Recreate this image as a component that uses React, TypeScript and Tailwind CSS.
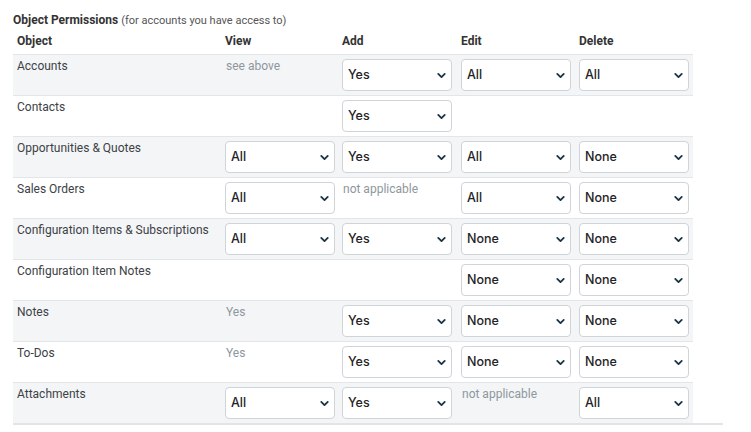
import { ChevronDown } from 'lucide-react';

type Cell = { kind: 'select'; value: string } | { kind: 'text'; value: string } | null;

type Row = {
  name: string;
  cells: Cell[];
};

const sel = (value: string): Cell => ({ kind: 'select', value });
const txt = (value: string): Cell => ({ kind: 'text', value });

const rows: Row[] = [
  { name: 'Accounts', cells: [txt('see above'), sel('Yes'), sel('All'), sel('All')] },
  { name: 'Contacts', cells: [null, sel('Yes'), null, null] },
  { name: 'Opportunities & Quotes', cells: [sel('All'), sel('Yes'), sel('All'), sel('None')] },
  { name: 'Sales Orders', cells: [sel('All'), txt('not applicable'), sel('All'), sel('None')] },
  {
    name: 'Configuration Items & Subscriptions',
    cells: [sel('All'), sel('Yes'), sel('None'), sel('None')],
  },
  { name: 'Configuration Item Notes', cells: [null, null, sel('None'), sel('None')] },
  { name: 'Notes', cells: [txt('Yes'), sel('Yes'), sel('None'), sel('None')] },
  { name: 'To-Dos', cells: [txt('Yes'), sel('Yes'), sel('None'), sel('None')] },
  { name: 'Attachments', cells: [sel('All'), sel('Yes'), txt('not applicable'), sel('All')] },
];

const optionsFor = (v: string) => (v === 'Yes' ? ['Yes', 'No'] : ['All', 'Mine', 'None']);

function PermSelect({ value }: { value: string }) {
  return (
    <div className="relative w-[110px] h-[32px]">
      <select
        defaultValue={value}
        className="appearance-none w-full h-full rounded-[4px] border border-[#cfd4d8] bg-white pl-[5px] pr-6 pt-[2px] font-['Inter',sans-serif] text-[12.5px] font-medium text-[#1f2326] outline-none">
        {optionsFor(value).map((o) => (
          <option key={o} value={o}>
            {o}
          </option>
        ))}
      </select>
      <ChevronDown
        size={13}
        strokeWidth={3.4}
        className="pointer-events-none absolute right-[4px] top-[10px] text-[#1b3444]"
      />
    </div>
  );
}

export default function App() {
  return (
    <div className="bg-white w-[751px] h-[432px] pl-[13px] pt-[13px] font-['Roboto',sans-serif]">
      {/* section title */}
      <div className="h-[15px] leading-[15px] text-[12px] text-[#333]">
        <span className="font-bold">Object Permissions</span>{' '}
        <span className="text-[11px] text-[#555]">(for accounts you have access to)</span>
      </div>

      <table className="border-collapse table-fixed w-[680px] mt-[5px]">
        <colgroup>
          <col className="w-[208px]" />
          <col className="w-[117px]" />
          <col className="w-[119px]" />
          <col className="w-[118px]" />
          <col className="w-[118px]" />
        </colgroup>
        <thead>
          <tr className="h-[21px]">
            {['Object', 'View', 'Add', 'Edit', 'Delete'].map((h) => (
              <th
                key={h}
                className="text-left align-top px-[4px] pt-[1px] text-[12px] leading-[15px] font-bold text-[#333]">
                {h}
              </th>
            ))}
          </tr>
        </thead>
        <tbody>
          {rows.map((row, i) => (
            <tr
              key={row.name}
              className={`border-t border-[#e3e6e8] h-[41px] ${i % 2 === 0 ? 'bg-[#f4f5f7]' : 'bg-white'}`}>
              <td className="align-top px-[4px] pt-[4px] text-[12px] leading-[14px] text-[#3c4246]">
                {row.name}
              </td>
              {row.cells.map((c, j) => (
                <td key={j} className="align-top px-[4px] pt-[4px] pb-[4px]">
                  {c?.kind === 'select' && <PermSelect value={c.value} />}
                  {c?.kind === 'text' && (
                    <span className="block text-[12px] leading-[14px] text-[#8e979d] pl-[1px]">
                      {c.value}
                    </span>
                  )}
                </td>
              ))}
            </tr>
          ))}
        </tbody>
      </table>
      <div className="w-[710px] h-[2px] bg-[#e2e4e6]" />
    </div>
  );
}
